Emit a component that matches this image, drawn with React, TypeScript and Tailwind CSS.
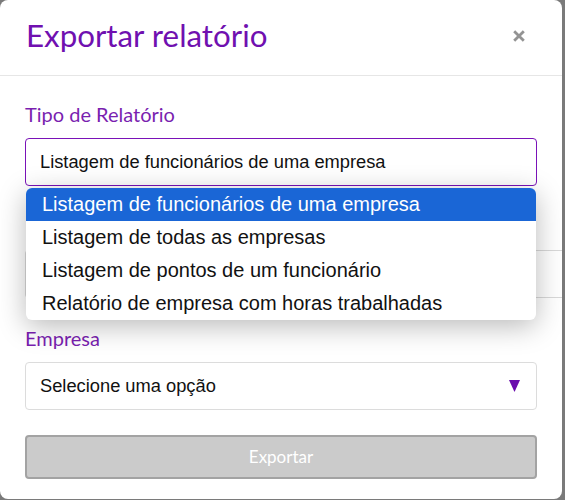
import React from 'react';

const opcoes = [
  'Listagem de funcionários de uma empresa',
  'Listagem de todas as empresas',
  'Listagem de pontos de um funcionário',
  'Relatório de empresa com horas trabalhadas',
];

export default function App() {
  return (
    <div className="w-[565px] h-[500px] bg-[#7a7a7a] overflow-hidden">
      <div className="w-[562px] h-[499px] bg-white rounded-lg flex flex-col">
        {/* Header */}
        <div className="h-[76px] shrink-0 flex items-center justify-between pl-[26px] pr-[37px] border-b border-[#e6e6e6]">
          <h1 className="text-[31.3px] leading-none text-[#7010b0] font-['Lato',sans-serif] pb-[3px]">
            Exportar relatório
          </h1>
          <svg width="12" height="12" viewBox="0 0 12 12" className="mb-[3px]">
            <path d="M1.2 1.2L10.8 10.8M10.8 1.2L1.2 10.8" stroke="#939393" strokeWidth="2.8" strokeLinecap="butt" />
          </svg>
        </div>

        {/* Body */}
        <div className="flex flex-col px-[25px] pt-[25px] font-['Liberation_Sans',sans-serif]">
          {/* Tipo de Relatório */}
          <label className="h-[27px] leading-[27px] text-[20px] text-[#7a1fb0] font-['Lato',sans-serif] mb-[10px]">
            Tipo de Relatório
          </label>
          <div className="relative z-10">
            <div className="h-[48px] flex items-center px-[14px] border border-[#7a12b8] rounded-[4px] text-[18.3px] text-[#111]">
              Listagem de funcionários de uma empresa
            </div>
            <ul className="absolute left-px right-px top-[50px] bg-white rounded-md overflow-hidden shadow-[0_6px_28px_rgba(0,0,0,0.28)] text-[20px] text-[#111]">
              {opcoes.map((o, i) => (
                <li
                  key={o}
                  className={`h-[33px] leading-[33px] px-[16px] ${i === 0 ? 'bg-[#1a66d6] text-white' : ''}`}
                >
                  {o}
                </li>
              ))}
            </ul>
          </div>

          {/* Hidden field (behind dropdown) */}
          <div className="mt-[27px] h-[27px] mb-[10px]" />
          <div className="h-[48px] mr-[-25px] border border-r-0 border-[#d9d9d9] rounded-l-[4px]" />

          {/* Empresa */}
          <label className="mt-[27px] h-[27px] leading-[27px] text-[20px] text-[#7a1fb0] font-['Lato',sans-serif] mb-[10px]">
            Empresa
          </label>
          <div className="h-[48px] flex items-center justify-between px-[14px] pr-[16px] border border-[#dcdcdc] rounded-[4px] text-[18.3px] text-[#111]">
            <span>Selecione uma opção</span>
            <svg width="11" height="12" viewBox="0 0 11 12">
              <polygon points="0,0 11,0 5.5,12" fill="#6a0dad" />
            </svg>
          </div>

          <button className="mt-[25px] h-[44px] rounded-[4px] bg-[#cbcbcb] border-2 border-[#a3a3a3] text-white text-[17px] font-['Lato',sans-serif]">
            Exportar
          </button>
        </div>
      </div>
    </div>
  );
}
